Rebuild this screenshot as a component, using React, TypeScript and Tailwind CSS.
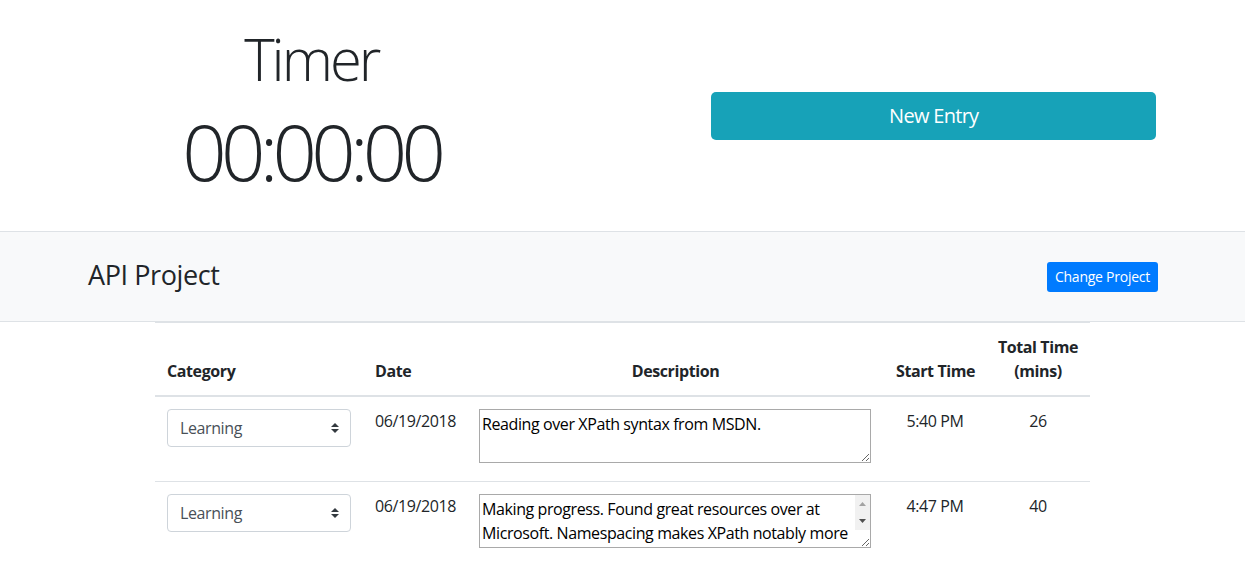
import React from 'react';

interface Entry {
  category: string;
  date: string;
  description: string;
  startTime: string;
  totalMins: number;
}

const entries: Entry[] = [
  {
    category: 'Learning',
    date: '06/19/2018',
    description: 'Reading over XPath syntax from MSDN.',
    startTime: '5:40 PM',
    totalMins: 26,
  },
  {
    category: 'Learning',
    date: '06/19/2018',
    description:
      'Making progress. Found great resources over at Microsoft. Namespacing makes XPath notably more complicated, but the examples cleared things up.',
    startTime: '4:47 PM',
    totalMins: 40,
  },
];

const CategorySelect: React.FC<{ value: string }> = ({ value }) => (
  <div className="relative w-[184px]">
    <select
      defaultValue={value}
      className="block w-full h-[38px] appearance-none rounded-[4px] border border-[#ced4da] bg-white pl-3 pr-7 text-[16px] leading-6 tracking-[-0.4px] text-[#495057] outline-none"
    >
      <option>Learning</option>
      <option>Development</option>
      <option>Meeting</option>
    </select>
    {/* caret arrows */}
    <svg
      className="pointer-events-none absolute right-[12px] top-1/2 -translate-y-1/2"
      width="8"
      height="10"
      viewBox="0 0 4 5"
    >
      <path fill="#343a40" d="M2 0L0 2h4zm0 5L0 3h4z" />
    </svg>
  </div>
);

const DescriptionBox: React.FC<{ text: string }> = ({ text }) => {
  const overflows = text.length > 90;
  return (
    <div className="relative w-[392px]">
      <textarea
        defaultValue={text}
        className={`block h-[54px] w-[392px] overflow-hidden border border-[#a9a9a9] py-[2px] pl-[2px] text-[16px] leading-6 tracking-[-0.4px] text-black outline-none ${overflows ? 'pr-[16px]' : 'pr-[2px]'}`}
      />
      {overflows && (
        <div className="pointer-events-none absolute right-[1px] top-[1px] flex h-[35px] w-[15px] flex-col items-center bg-[#f1f1f1]">
          <div className="flex h-[17px] items-center">
            <svg width="7" height="4" viewBox="0 0 7 4">
              <path fill="#a3a3a3" d="M3.5 0L7 4H0z" />
            </svg>
          </div>
          <div className="flex h-[17px] items-center">
            <svg width="7" height="4" viewBox="0 0 7 4">
              <path fill="#505050" d="M0 0h7L3.5 4z" />
            </svg>
          </div>
        </div>
      )}
    </div>
  );
};

const App: React.FC = () => {
  return (
    <div className="min-h-screen w-full bg-white text-[#212529] [font-family:'Open_Sans',sans-serif]">
      {/* timer + new entry */}
      <div className="flex h-[231px] items-center">
        <div className="w-1/2 self-start pt-[23px] text-center font-light">
          <h1 className="h-[72px] text-[58px] leading-[72px] tracking-[-3px]">Timer</h1>
          <div className="mt-[9px] h-[94px] text-[78px] leading-[94px] tracking-[-5.8px]">00:00:00</div>
        </div>
        <div className="w-1/2 flex justify-center">
          <button className="w-[445px] h-[48px] rounded-[5px] bg-[#17a2b8] text-[20px] tracking-[-0.7px] text-white">
            New Entry
          </button>
        </div>
      </div>

      {/* project bar */}
      <div className="flex h-[91px] items-center justify-between border-y border-[#dee2e6] bg-[#f8f9fa] pl-[88px] pr-[87px]">
        <h3 className="text-[27px] leading-[1.2] tracking-[-0.4px] pb-[3px]">API Project</h3>
        <button className="h-[30px] rounded-[3px] bg-[#007bff] px-2 text-[14px] tracking-[-0.25px] text-white">
          Change Project
        </button>
      </div>

      {/* entries table */}
      <table className="mx-auto w-[935px] table-fixed border-collapse text-[16px] leading-6 tracking-[-0.4px]">
        <colgroup>
          <col className="w-[208px]" />
          <col className="w-[104px]" />
          <col className="w-[417px]" />
          <col className="w-[102px]" />
          <col className="w-[104px]" />
        </colgroup>
        <thead>
          <tr className="border-t border-[#dee2e6]">
            <th className="border-b-2 border-[#dee2e6] p-3 text-left align-bottom font-bold">Category</th>
            <th className="border-b-2 border-[#dee2e6] p-3 text-left align-bottom font-bold">Date</th>
            <th className="border-b-2 border-[#dee2e6] p-3 text-center align-bottom font-bold">Description</th>
            <th className="border-b-2 border-[#dee2e6] p-3 text-center align-bottom font-bold whitespace-nowrap">Start Time</th>
            <th className="border-b-2 border-[#dee2e6] px-0 py-3 text-center align-bottom font-bold whitespace-nowrap">
              Total Time
              <br />
              (mins)
            </th>
          </tr>
        </thead>
        <tbody>
          {entries.map((e, i) => (
            <tr key={i} className="border-t border-[#dee2e6]">
              <td className="px-3 pt-3 pb-[18px] align-top">
                <CategorySelect value={e.category} />
              </td>
              <td className="px-3 pt-3 align-top whitespace-nowrap">{e.date}</td>
              <td className="px-3 pt-3 pb-[18px] align-top">
                <DescriptionBox text={e.description} />
              </td>
              <td className="px-3 pt-3 align-top text-center">{e.startTime}</td>
              <td className="px-3 pt-3 align-top text-center">{e.totalMins}</td>
            </tr>
          ))}
        </tbody>
      </table>
    </div>
  );
};

export default App;
